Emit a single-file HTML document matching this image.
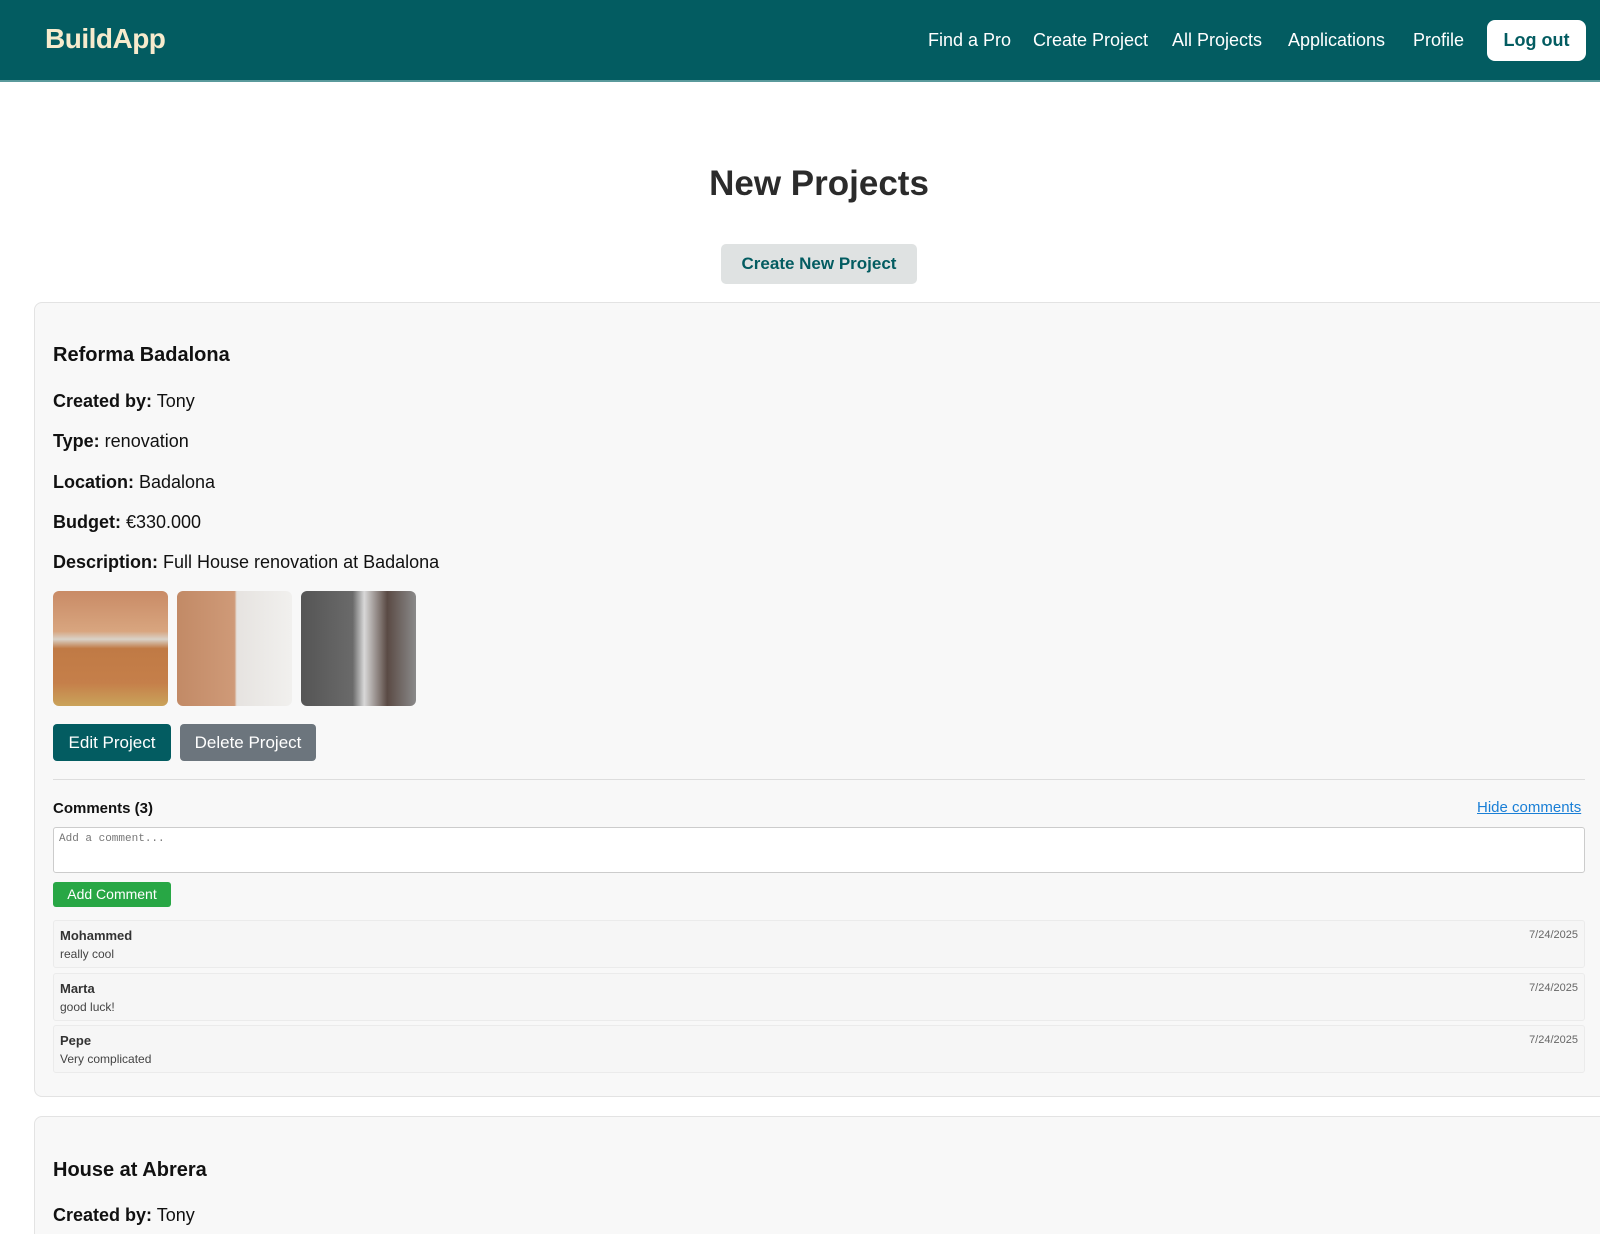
<!DOCTYPE html>
<html><head><meta charset="utf-8"><style>
*{box-sizing:border-box;margin:0;padding:0}
html,body{width:1600px;height:1234px;overflow:hidden}
body{background:#fff;font-family:"Liberation Sans",Arial,sans-serif;color:#111;position:relative}
.nav{position:absolute;left:0;top:0;width:1600px;height:82px;background:#035c61;border-bottom:2px solid #5a9a9c}
.logo{position:absolute;left:45px;top:23px;font-size:28px;font-weight:bold;color:#f7ebcd;letter-spacing:-0.5px}
.nl{position:absolute;top:30px;font-size:18px;color:#fff}
.logout{position:absolute;left:1487px;top:20px;width:99px;height:41px;background:#fff;border-radius:8px;color:#035c61;font-weight:bold;font-size:18px;text-align:center;line-height:41px}
h1{position:absolute;left:0;width:1638px;text-align:center;top:164px;font-size:35px;color:#2b2b2b}
.cbtn{position:absolute;left:721px;top:244px;width:196px;height:40px;background:#dfe2e2;border-radius:5px;color:#035c61;font-weight:bold;font-size:17px;text-align:center;line-height:40px}
.card{position:absolute;left:34px;width:1600px;background:#f8f8f8;border:1px solid #e3e3e3;border-radius:8px}
.t{position:absolute;left:53px;font-size:18px}
.t b{font-weight:bold}
h2{position:absolute;left:53px;font-size:20px;font-weight:bold}
.img{position:absolute;top:591px;width:115px;height:115px;border-radius:6px}
.btn{position:absolute;top:724px;height:37px;border-radius:4px;color:#fff;font-size:17px;text-align:center;line-height:37px}
.ci{position:absolute;left:53px;width:1532px;height:48px;background:#f6f6f6;border:1px solid #ebebeb;border-radius:3px}
.ci .n{position:absolute;left:6px;top:7px;font-size:13px;font-weight:bold;color:#333}
.ci .m{position:absolute;left:6px;top:26px;font-size:12px;color:#444}
.ci .d{position:absolute;right:6px;top:8px;font-size:11px;color:#666}
</style></head><body>
<div class="nav">
<div class="logo">BuildApp</div>
<div class="nl" style="left:928px">Find a Pro</div>
<div class="nl" style="left:1033px">Create Project</div>
<div class="nl" style="left:1172px">All Projects</div>
<div class="nl" style="left:1288px">Applications</div>
<div class="nl" style="left:1413px">Profile</div>
<div class="logout">Log out</div>
</div>
<h1>New Projects</h1>
<div class="cbtn">Create New Project</div>
<div class="card" style="top:302px;height:795px"></div>
<h2 style="top:344px">Reforma Badalona</h2>
<div class="t" style="top:391px"><b>Created by:</b> Tony</div>
<div class="t" style="top:431px"><b>Type:</b> renovation</div>
<div class="t" style="top:472px"><b>Location:</b> Badalona</div>
<div class="t" style="top:512px"><b>Budget:</b> €330.000</div>
<div class="t" style="top:552px"><b>Description:</b> Full House renovation at Badalona</div>
<div class="img" style="left:53px;background:linear-gradient(180deg,#c98b66 0%,#d8a57f 35%,#d9d2c8 42%,#c07a45 50%,#c57f4a 80%,#caa35a 100%)"></div>
<div class="img" style="left:177px;background:linear-gradient(90deg,#c28a66 0%,#cf9a78 50%,#e6e3e0 52%,#f1f0ee 100%)"></div>
<div class="img" style="left:301px;background:linear-gradient(90deg,#555 0%,#6a6a6a 45%,#d8d8d8 55%,#5a4a44 75%,#8a8a8a 100%)"></div>
<div class="btn" style="left:53px;width:118px;background:#035c61">Edit Project</div>
<div class="btn" style="left:180px;width:136px;background:#6c757d">Delete Project</div>
<div style="position:absolute;left:53px;top:779px;width:1532px;height:1px;background:#ddd"></div>
<div style="position:absolute;left:53px;top:800px;font-size:15px;font-weight:bold">Comments (3)</div>
<div style="position:absolute;left:1477px;top:799px;font-size:15px;color:#1a7fd6;text-decoration:underline">Hide comments</div>
<div style="position:absolute;left:53px;top:827px;width:1532px;height:46px;background:#fff;border:1px solid #ccc;border-radius:3px;font-family:'Liberation Mono',monospace;font-size:11px;color:#777;padding:5px 5px">Add a comment...</div>
<div style="position:absolute;left:53px;top:882px;width:118px;height:25px;background:#28a745;border-radius:3px;color:#fff;font-size:14px;text-align:center;line-height:25px">Add Comment</div>
<div class="ci" style="top:920px"><span class="n">Mohammed</span><span class="m">really cool</span><span class="d">7/24/2025</span></div>
<div class="ci" style="top:973px"><span class="n">Marta</span><span class="m">good luck!</span><span class="d">7/24/2025</span></div>
<div class="ci" style="top:1025px"><span class="n">Pepe</span><span class="m">Very complicated</span><span class="d">7/24/2025</span></div>
<div class="card" style="top:1116px;height:160px"></div>
<h2 style="top:1159px">House at Abrera</h2>
<div class="t" style="top:1205px"><b>Created by:</b> Tony</div>
</body></html>
